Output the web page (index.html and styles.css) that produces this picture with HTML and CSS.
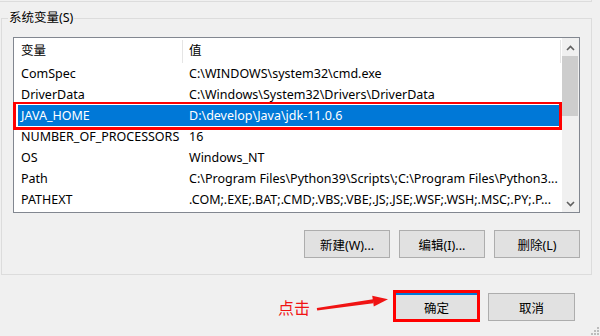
FILE: index.html
```html
<!DOCTYPE html>
<html lang="zh-CN">
<head>
  <meta charset="UTF-8" />
  <title>环境变量</title>
  <link rel="stylesheet" href="styles.css">
</head>
<body>

  <div class="haut"></div>

  <div class="groupe">
    <span class="titre">系统变量(S)</span>

    <div class="liste">
      <div class="table">
        <div class="entete">
          <div class="col1">变量</div>
          <div class="col2">值</div>
        </div>
        <div class="ligne"><div class="col1">ComSpec</div><div class="col2">C:\WINDOWS\system32\cmd.exe</div></div>
        <div class="ligne"><div class="col1">DriverData</div><div class="col2">C:\Windows\System32\Drivers\DriverData</div></div>
        <div class="ligne sel"><div class="col1">JAVA_HOME</div><div class="col2">D:\develop\Java\jdk-11.0.6</div></div>
        <div class="ligne"><div class="col1">NUMBER_OF_PROCESSORS</div><div class="col2">16</div></div>
        <div class="ligne"><div class="col1">OS</div><div class="col2">Windows_NT</div></div>
        <div class="ligne"><div class="col1">Path</div><div class="col2">C:\Program Files\Python39\Scripts\;C:\Program Files\Python3...</div></div>
        <div class="ligne"><div class="col1">PATHEXT</div><div class="col2">.COM;.EXE;.BAT;.CMD;.VBS;.VBE;.JS;.JSE;.WSF;.WSH;.MSC;.PY;.P...</div></div>
      </div>

      <!-- barre de défilement -->
      <div class="defil">
        <div class="fleche haut-fleche">
          <svg width="9" height="6" viewBox="0 0 9 6"><polyline points="1,5 4.5,1.5 8,5" fill="none" stroke="#606060" stroke-width="1.6"/></svg>
        </div>
        <div class="pouce"></div>
        <div class="piste"></div>
        <div class="fleche">
          <svg width="9" height="6" viewBox="0 0 9 6"><polyline points="1,1 4.5,4.5 8,1" fill="none" stroke="#606060" stroke-width="1.6"/></svg>
        </div>
      </div>

      <div class="cadre-sel"></div>
    </div>

    <div class="boutons">
      <button>新建(W)...</button>
      <button>编辑(I)...</button>
      <button>删除(L)</button>
    </div>
  </div>

  <div class="pied">
    <span class="note">点击</span>
    <svg class="fleche-rouge" width="78" height="22" viewBox="0 0 78 22">
      <polygon points="4.8,18.1 61,9.3 61.3,13.3 5.2,20.6" fill="#f01414"/>
      <polygon points="60.2,5.8 76,9.3 61.8,16.6" fill="#f01414"/>
    </svg>
    <span class="cadre"><button class="ok">确定</button></span>
    <button class="annuler">取消</button>
  </div>

  <svg class="poignee" width="10" height="10" viewBox="0 0 10 10">
    <rect x="7" y="1" width="2" height="2" fill="#bcbcbc"/>
    <rect x="4" y="4" width="2" height="2" fill="#bcbcbc"/>
    <rect x="7" y="4" width="2" height="2" fill="#bcbcbc"/>
    <rect x="1" y="7" width="2" height="2" fill="#bcbcbc"/>
    <rect x="4" y="7" width="2" height="2" fill="#bcbcbc"/>
    <rect x="7" y="7" width="2" height="2" fill="#bcbcbc"/>
  </svg>

</body>
</html>
```

FILE: styles.css
```css
body {
  margin: 0;
  background: #f0f0f0;
  font-family: "Noto Sans", "Noto Sans CJK SC", sans-serif;
  font-size: 12.5px;
  color: #000;
  position: relative;
  height: 336px;
  overflow: hidden;
}
.haut {
  width: 591px;
  height: 1px;
  border-bottom: 1px solid #dcdcdc;
  border-right: 1px solid #dcdcdc;
}

/* Cadre "系统变量" */
.groupe {
  position: relative;
  box-sizing: border-box;
  width: 591px;
  margin: 16px 0 0 1px;
  padding: 18px 11px 16px;
  border: 1px solid #dcdcdc;
}
.titre {
  position: absolute;
  left: 6px;
  top: -9px;
  padding: 0 1px;
  line-height: 16px;
  background: #f0f0f0;
}

/* Liste des variables */
.liste {
  position: relative;
  display: flex;
  height: 176px;
  box-sizing: border-box;
  border: 1px solid #828790;
  background: #fff;
}
.table {
  flex: 1;
}
.entete {
  display: flex;
  height: 25px;
}
.entete div {
  margin-top: 2px;
  line-height: 21px;
  border-right: 1px solid #e5e5e5;
}
.entete .col2 {
  margin-right: 1px;
}
.col1 {
  width: 169px;
  padding-left: 7px;
  box-sizing: border-box;
  white-space: nowrap;
  flex-shrink: 0;
}
.col2 {
  flex: 1;
  padding-left: 6px;
  white-space: nowrap;
  overflow: hidden;
}
.ligne {
  display: flex;
  height: 21px;
  line-height: 21px;
}
.ligne.sel {
  background: #0078d7;
  color: #fff;
  margin-left: 4px;
}
.ligne.sel .col1 {
  width: 165px;
  padding-left: 3px;
}
.cadre-sel {
  position: absolute;
  left: -1px;
  top: 64px;
  width: 549px;
  height: 28px;
  box-sizing: border-box;
  border: 3px solid #f00;
  border-top-width: 2px;
}

/* Barre de défilement */
.defil {
  width: 17px;
  display: flex;
  flex-direction: column;
  background: #f0f0f0;
}
.fleche {
  height: 17px;
  display: flex;
  align-items: center;
  justify-content: center;
}
.haut-fleche {
  height: 18px;
  padding-top: 2px;
  box-sizing: border-box;
}
.pouce {
  height: 60px;
  margin-right: 1px;
  background: #cdcdcd;
}
.piste {
  flex: 1;
}

/* Boutons */
button {
  font: inherit;
  color: #000;
  width: 86px;
  height: 28px;
  padding: 0;
  border: 1px solid #adadad;
  background: #e1e1e1;
}
.boutons {
  display: flex;
  justify-content: flex-end;
  gap: 9px;
  margin-top: 17px;
}
.pied {
  display: flex;
  justify-content: flex-end;
  align-items: flex-start;
  padding: 15px 25px 0 0;
}
.note {
  color: #f01414;
  font-family: "Noto Sans CJK SC", sans-serif;
  font-size: 16px;
  line-height: 20px;
  margin: 7px 2px 0 0;
}
.fleche-rouge {
  margin-right: 3px;
}
.cadre {
  display: block;
  width: 87px;
  height: 32px;
  box-sizing: border-box;
  border: 3px solid #f00;
  margin-right: 8px;
}
.cadre .ok {
  display: block;
  width: 81px;
  height: 26px;
  border: none;
  border-top: 2px solid #0078d7;
}
.annuler {
  width: 87px;
  margin-top: 3px;
}
.poignee {
  position: absolute;
  right: 0;
  bottom: 0;
}
```
